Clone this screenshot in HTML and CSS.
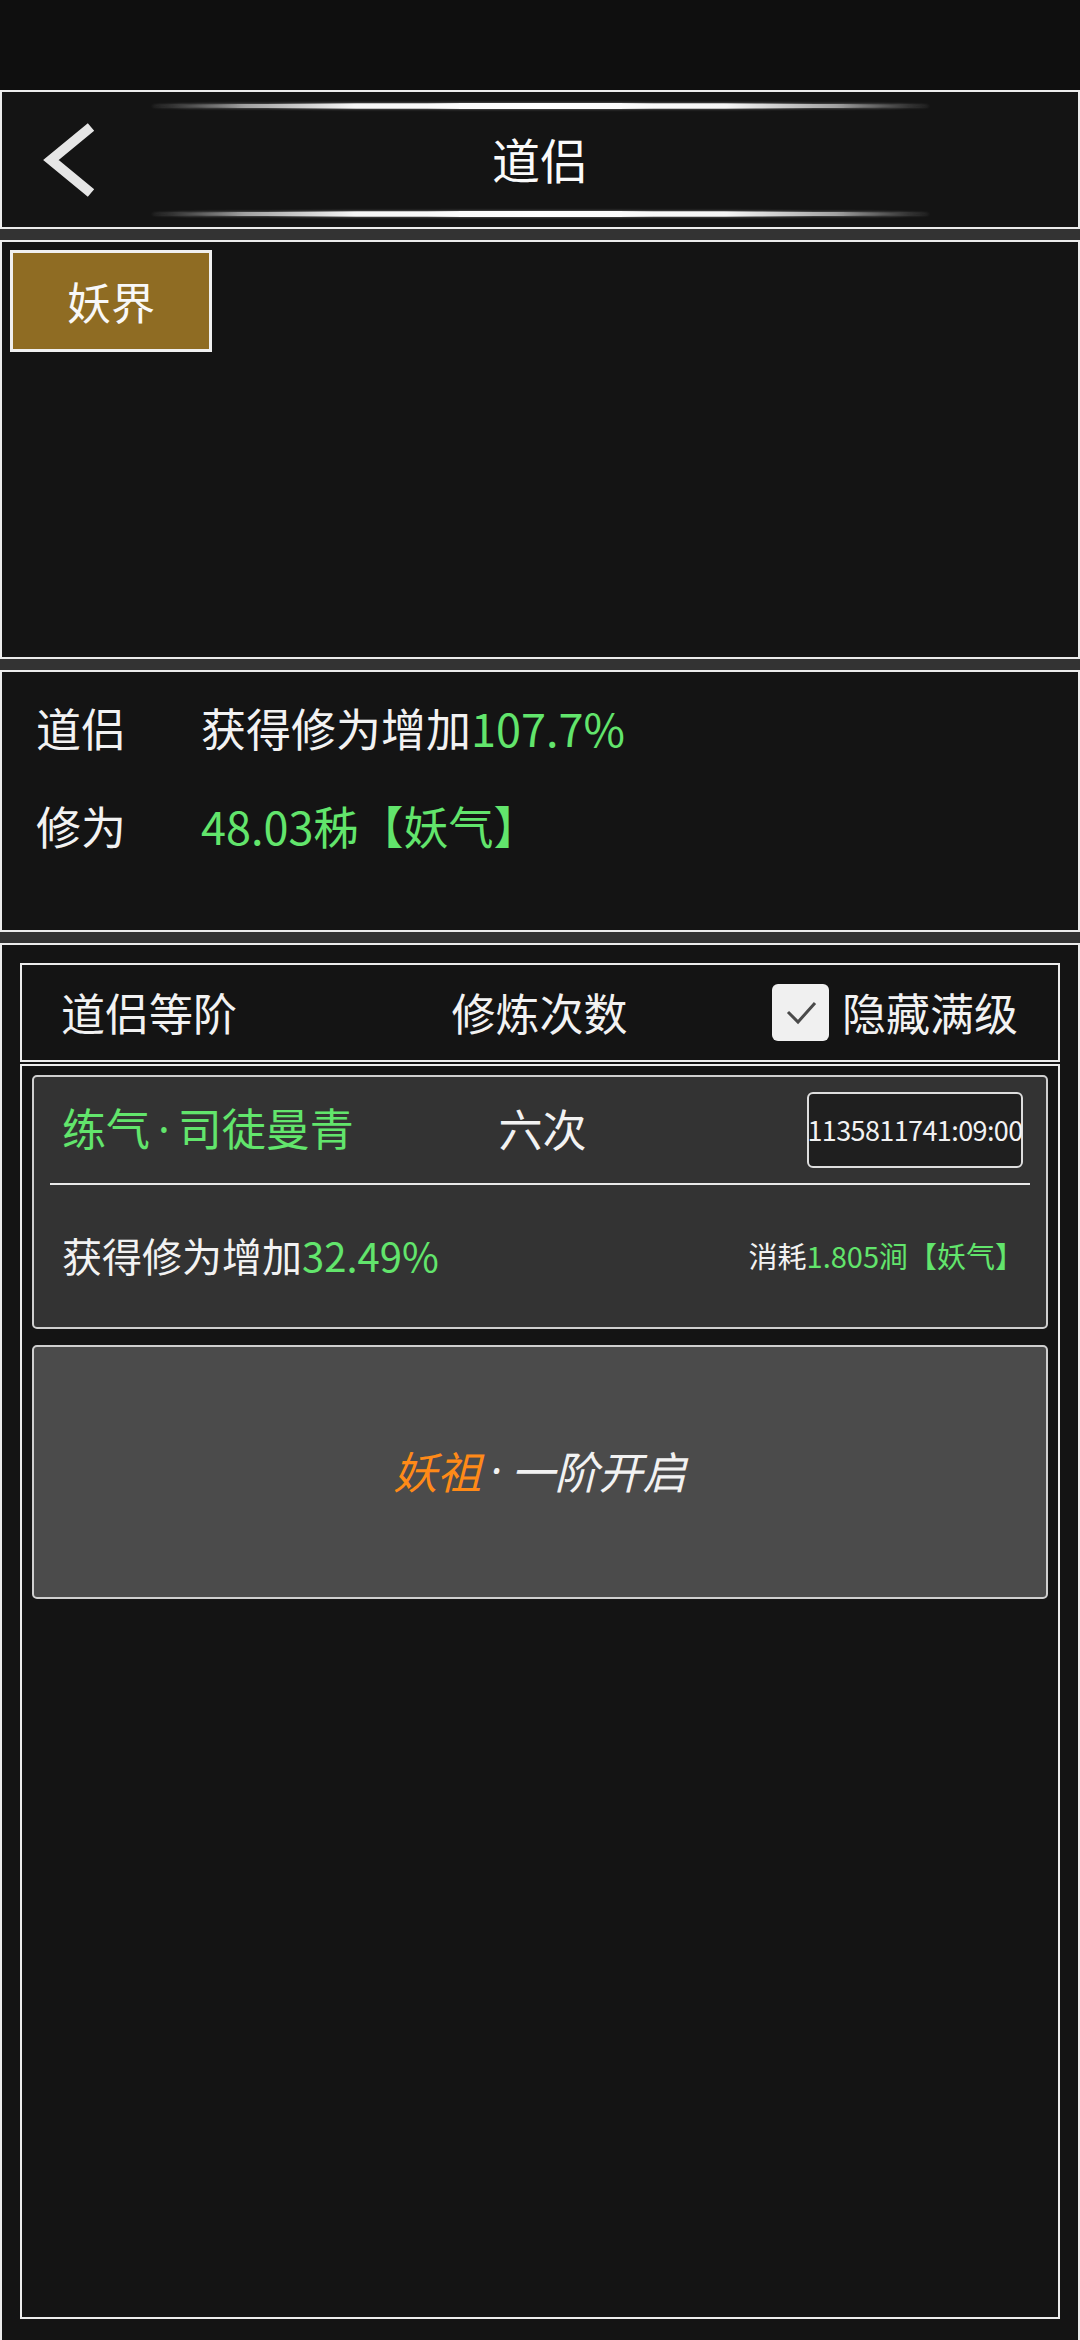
FILE: index.html
```html
<!DOCTYPE html>
<html lang="zh-CN">
<head>
<meta charset="utf-8">
<title>道侣</title>
<link rel="stylesheet" href="styles.css">
</head>
<body>
<div class="statusbar"></div>
<header class="topbar">
  <div class="glow"></div>
  <div class="topbar-row">
    <svg class="back" viewBox="0 0 60 80" width="60" height="80"><polyline points="51,7 11,40 51,73"/></svg>
    <h1 class="title">道侣</h1>
    <span></span>
  </div>
  <div class="glow"></div>
</header>
<div class="sep"></div>
<section class="panel tabs">
  <button class="tab">妖界</button>
</section>
<div class="sep"></div>
<section class="panel info">
  <div class="info-row"><span class="label">道侣</span><span>获得修为增加<span class="g">107.7%</span></span></div>
  <div class="info-row"><span class="label">修为</span><span class="g">48.03秭【妖气】</span></div>
</section>
<div class="sep"></div>
<section class="panel main">
  <div class="thead">
    <span class="th-left">道侣等阶</span>
    <span class="th-mid">修炼次数</span>
    <span class="hide"><span class="check"><svg viewBox="0 0 57 57" width="57" height="57"><polyline points="16,28 26,38 43,19"/></svg></span>隐藏满级</span>
  </div>
  <div class="list">
    <div class="card">
      <div class="card-top">
        <span class="g name">练气<span class="dot">·</span>司徒曼青</span>
        <span class="times">六次</span>
        <span class="timer">1135811741:09:00</span>
      </div>
      <div class="divider"></div>
      <div class="card-bottom">
        <span>获得修为增加<span class="g">32.49%</span></span>
        <span class="cost">消耗<span class="g">1.805涧【妖气】</span></span>
      </div>
    </div>
    <div class="card locked"><span class="o">妖祖</span><span class="dot">·</span>一阶开启</div>
  </div>
</section>
</body>
</html>
```

FILE: styles.css
```css
* { box-sizing: border-box; }
html, body { margin: 0; padding: 0; }
body {
  width: 1080px;
  height: 2340px;
  overflow: hidden;
  background: #141414;
  color: #f2f2f2;
  font-family: "Noto Sans CJK SC", "Noto Sans", sans-serif;
  font-size: 44px;
}
.statusbar { height: 90px; background: #0f0f0f; }
.topbar {
  height: 139px;
  border: 2px solid #ececec;
  background: #141414;
  display: flex;
  flex-direction: column;
  align-items: center;
  padding: 11px 0 10px;
}
.glow {
  width: 777px;
  height: 6px;
  border-radius: 50%;
  background: linear-gradient(to right, rgba(255,255,255,0) 0%, rgba(220,220,220,0.7) 12%, #f6f6f6 26%, #ffffff 50%, #f6f6f6 74%, rgba(220,220,220,0.7) 88%, rgba(255,255,255,0) 100%);
  box-shadow: 0 0 3px rgba(255,255,255,0.45);
}
.topbar-row {
  flex: 1;
  width: 100%;
  display: grid;
  grid-template-columns: 1fr auto 1fr;
  align-items: center;
}
.back { margin-left: 38px; }
.back polyline { fill: none; stroke: #e6e6e6; stroke-width: 10; stroke-linejoin: miter; stroke-linecap: butt; }
.title { margin: 0 0 5px; font-size: 48px; font-weight: 400; line-height: 1; color: #fafafa; }
.sep { height: 11px; background: #333333; }
.panel { border: 2px solid #ececec; background: #141414; }
.tabs { height: 419px; padding: 8px; }
.tab {
  display: block;
  width: 202px;
  height: 102px;
  margin: 0;
  padding: 0;
  border: 3px solid #f0f0f0;
  background: #8f6c23;
  color: #f8f8f8;
  font-family: inherit;
  font-size: 44px;
  line-height: 1;
}
.info { height: 262px; padding: 6px 0 0 34px; font-size: 45px; }
.info-row { height: 98px; display: flex; align-items: center; line-height: 1; }
.label { width: 165px; }
.g { color: #62e56c; }
.o { color: #ff8a18; }
.dot { font-family: "Noto Sans", sans-serif; margin: 0 8px; }
.main { height: 1400px; padding: 18px; }
.thead {
  height: 99px;
  border: 2px solid #ececec;
  display: grid;
  grid-template-columns: 1fr auto 1fr;
  align-items: center;
  padding: 0 40px 2px 39px;
  line-height: 1;
  margin-bottom: 2px;
}
.hide { justify-self: end; display: flex; align-items: center; gap: 13px; }
.check { width: 57px; height: 57px; border-radius: 6px; background: #f0f0f0; display: block; margin-top: 2px; }
.check svg { display: block; }
.check polyline { fill: none; stroke: #4a4a4a; stroke-width: 3; }
.list { height: 1255px; border: 2px solid #ececec; padding: 9px 10px; display: flex; flex-direction: column; gap: 16px; }
.card { height: 254px; border: 2px solid #cfcfcf; border-radius: 5px; background: #333333; }
.card-top {
  height: 106px;
  display: grid;
  grid-template-columns: 1fr auto 1fr;
  align-items: center;
  padding: 0 23px 5px 28px;
  line-height: 1;
}
.timer {
  justify-self: end;
  width: 216px;
  height: 76px;
  border: 2px solid #dedede;
  border-radius: 6px;
  background: #1f1f1f;
  font-size: 27px;
  letter-spacing: -0.6px;
  display: flex;
  align-items: center;
  justify-content: center;
  white-space: nowrap;
  margin-top: 4px;
}
.divider { height: 2px; background: #eaeaea; margin: 0 16px; }
.card-bottom {
  height: 142px;
  display: flex;
  justify-content: space-between;
  align-items: center;
  padding: 0 22px 2px 28px;
  font-size: 40px;
  line-height: 1;
}
.cost { font-size: 29px; }
.locked {
  background: #4b4b4b;
  display: flex;
  align-items: center;
  justify-content: center;
  font-style: italic;
  line-height: 1;
  padding-bottom: 4px;
}
.locked .dot { margin: 0 9px; }
```
